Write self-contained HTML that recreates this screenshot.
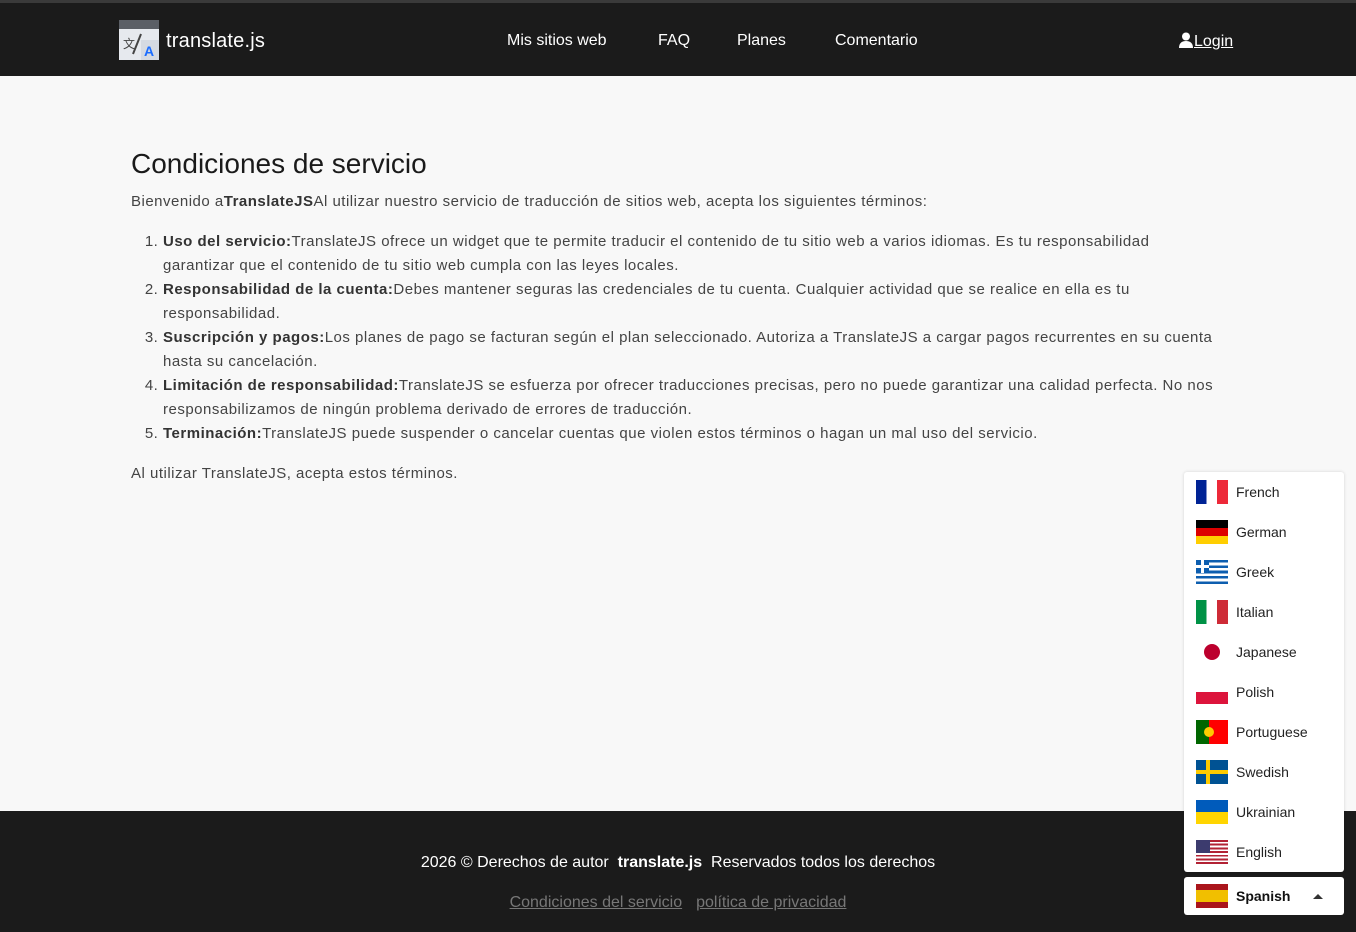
<!DOCTYPE html>
<html><head><meta charset="utf-8"><style>
*{margin:0;padding:0;box-sizing:border-box}
body{width:1356px;height:932px;overflow:hidden;background:#f8f8f8;font-family:"Liberation Sans",sans-serif;color:#444;position:relative}
.hdr{position:absolute;top:0;left:0;width:1356px;height:76px;background:#1b1b1b;border-top:3px solid #3a3a3a}
.logo{position:absolute;left:119px;top:17px;width:40px;height:40px;background:#e6e9ee}
.logo .bar{position:absolute;left:0;top:0;width:40px;height:9px;background:#5b5f66}
.brand{position:absolute;left:166px;top:27px;color:#fff;font-size:20px;letter-spacing:.2px}
.nav a{position:absolute;top:29px;color:#fff;font-size:16px;text-decoration:none}
.login{position:absolute;left:1178px;top:29px;color:#fff;font-size:16px}
.login span{text-decoration:underline}
h1{position:absolute;left:131px;top:148px;font-size:28px;font-weight:normal;color:#1a1a1a}
.c{position:absolute;left:131px;font-size:15px;line-height:24px;white-space:nowrap;letter-spacing:.5px}
ol{position:absolute;left:163px;top:230px;font-size:15px;line-height:24px;white-space:nowrap;letter-spacing:.5px}
b{color:#333}
.ftr{position:absolute;top:811px;left:0;width:1356px;height:121px;background:#1b1b1b}
.ft1{position:absolute;width:100%;text-align:center;color:#fff;font-size:16px}
.ft2{position:absolute;width:100%;text-align:center;color:#777;font-size:16px}
.ft2 a{color:#777;margin:0 7px;text-decoration:underline}
.dd{position:absolute;left:1184px;top:472px;width:160px;height:400px;background:#fff;border-radius:3px;box-shadow:0 0 3px rgba(0,0,0,.15)}
.it{height:40px;position:relative;font-size:14px;color:#222}
.it span{position:absolute;left:52px;top:12px}
.f{position:absolute;left:12px;top:8px;width:32px;height:24px}
.sel{position:absolute;left:1184px;top:877px;width:160px;height:38px;background:#fff;border-radius:3px}
</style></head><body>
<div class="hdr">
<div class="logo"><div class="bar"></div>
<svg width="40" height="40" style="position:absolute;left:0;top:0"><text x="4" y="28" font-size="12" fill="#444">文</text><line x1="14" y1="34" x2="22" y2="14" stroke="#444" stroke-width="2"/><rect x="22" y="20" width="18" height="20" fill="#d5dae2"/><text x="25" y="36" font-size="14" font-weight="bold" fill="#1a6cff" font-family="Liberation Sans">A</text></svg></div>
<div class="brand">translate.js</div>
<div class="nav"><a style="left:507px">Mis sitios web</a><a style="left:658px">FAQ</a><a style="left:737px">Planes</a><a style="left:835px">Comentario</a></div>
<div class="login"><svg width="16" height="16" viewBox="0 0 16 16" style="vertical-align:-2px"><circle cx="8" cy="4.5" r="4" fill="#fff"/><path d="M1 16C1 11 4 9 8 9S15 11 15 16Z" fill="#fff"/></svg><span>Login</span></div>
</div>
<h1>Condiciones de servicio</h1>
<div class="c" style="top:190px">Bienvenido a<b>TranslateJS</b>Al utilizar nuestro servicio de traducción de sitios web, acepta los siguientes términos:</div>
<ol>
<li><b>Uso del servicio:</b>TranslateJS ofrece un widget que te permite traducir el contenido de tu sitio web a varios idiomas. Es tu responsabilidad<br>garantizar que el contenido de tu sitio web cumpla con las leyes locales.</li>
<li><b>Responsabilidad de la cuenta:</b>Debes mantener seguras las credenciales de tu cuenta. Cualquier actividad que se realice en ella es tu<br>responsabilidad.</li>
<li><b>Suscripción y pagos:</b>Los planes de pago se facturan según el plan seleccionado. Autoriza a TranslateJS a cargar pagos recurrentes en su cuenta<br>hasta su cancelación.</li>
<li><b>Limitación de responsabilidad:</b>TranslateJS se esfuerza por ofrecer traducciones precisas, pero no puede garantizar una calidad perfecta. No nos<br>responsabilizamos de ningún problema derivado de errores de traducción.</li>
<li><b>Terminación:</b>TranslateJS puede suspender o cancelar cuentas que violen estos términos o hagan un mal uso del servicio.</li>
</ol>
<div class="c" style="top:462px">Al utilizar TranslateJS, acepta estos términos.</div>
<div class="ftr">
<div class="ft1" style="top:43px">2026 © Derechos de autor &nbsp;<b style="color:#fff">translate.js</b>&nbsp; Reservados todos los derechos</div>
<div class="ft2" style="top:83px"><a>Condiciones del servicio</a><a>política de privacidad</a></div>
</div>
<div class="dd">
<div class="it"><div class="f" style="background:linear-gradient(90deg,#002395 33%,#fff 33% 66%,#ed2939 66%)"></div><span>French</span></div>
<div class="it"><div class="f" style="background:linear-gradient(#000 33%,#d00 33% 66%,#ffce00 66%)"></div><span>German</span></div>
<div class="it"><div class="f" style="background:repeating-linear-gradient(#0d5eaf 0 2.67px,#fff 2.67px 5.33px)"><div style="width:13px;height:13px;background:#0d5eaf;position:relative"><div style="position:absolute;left:5px;top:0;width:3px;height:13px;background:#fff"></div><div style="position:absolute;left:0;top:5px;width:13px;height:3px;background:#fff"></div></div></div><span>Greek</span></div>
<div class="it"><div class="f" style="background:linear-gradient(90deg,#009246 33%,#fff 33% 66%,#ce2b37 66%)"></div><span>Italian</span></div>
<div class="it"><div class="f" style="background:#fff"><div style="position:absolute;left:8px;top:4px;width:16px;height:16px;border-radius:50%;background:#bc002d"></div></div><span>Japanese</span></div>
<div class="it"><div class="f" style="background:linear-gradient(#fff 50%,#dc143c 50%)"></div><span>Polish</span></div>
<div class="it"><div class="f" style="background:linear-gradient(90deg,#006600 40%,#f00 40%)"><div style="position:absolute;left:8px;top:7px;width:10px;height:10px;border-radius:50%;background:#ffcc00"></div></div><span>Portuguese</span></div>
<div class="it"><div class="f" style="background:#005293"><div style="position:absolute;left:10px;top:0;width:4px;height:24px;background:#fecb00"></div><div style="position:absolute;left:0;top:10px;width:32px;height:4px;background:#fecb00"></div></div><span>Swedish</span></div>
<div class="it"><div class="f" style="background:linear-gradient(#005bbb 50%,#ffd500 50%)"></div><span>Ukrainian</span></div>
<div class="it"><div class="f" style="background:repeating-linear-gradient(#b22234 0 1.85px,#fff 1.85px 3.7px)"><div style="width:14px;height:13px;background:#3c3b6e"></div></div><span>English</span></div>
</div>
<div class="sel"><div class="it"><div class="f" style="top:7px;background:linear-gradient(#aa151b 25%,#f1bf00 25% 75%,#aa151b 75%)"></div><span style="top:11px;font-weight:bold;color:#111">Spanish</span><svg style="position:absolute;left:128px;top:15px" width="12" height="8"><path d="M1 7L6 2L11 7Z" fill="#333"/></svg></div></div>
</body></html>
